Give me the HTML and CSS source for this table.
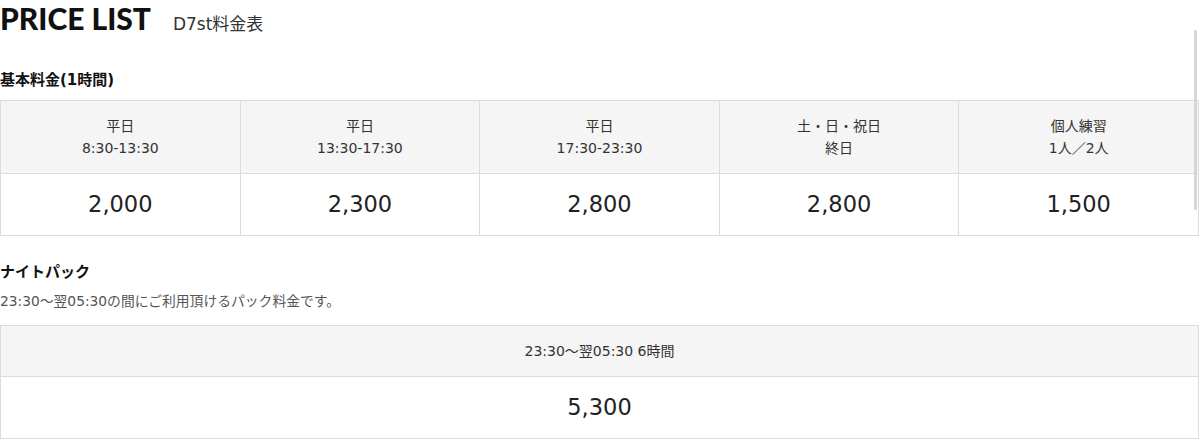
FILE: index.html
```html
<!DOCTYPE html>
<html lang="ja">
<head>
<meta charset="utf-8">
<title>PRICE LIST</title>
<link rel="stylesheet" href="styles.css">
</head>
<body>
<div class="page">
  <header class="title">
    <h1 class="title-main">PRICE LIST</h1>
    <span class="title-sub">D7st料金表</span>
  </header>

  <section class="block block-basic">
    <h2 class="block-heading">基本料金(1時間)</h2>
    <table class="price-table">
      <thead>
        <tr>
          <th>平日<br>8:30-13:30</th>
          <th>平日<br>13:30-17:30</th>
          <th>平日<br>17:30-23:30</th>
          <th>土・日・祝日<br>終日</th>
          <th>個人練習<br>1人／2人</th>
        </tr>
      </thead>
      <tbody>
        <tr>
          <td>2,000</td>
          <td>2,300</td>
          <td>2,800</td>
          <td>2,800</td>
          <td>1,500</td>
        </tr>
      </tbody>
    </table>
  </section>

  <section class="block block-night">
    <h2 class="block-heading">ナイトパック</h2>
    <p class="block-desc">23:30〜翌05:30の間にご利用頂けるパック料金です。</p>
    <table class="price-table">
      <thead>
        <tr><th>23:30〜翌05:30 6時間</th></tr>
      </thead>
      <tbody>
        <tr><td>5,300</td></tr>
      </tbody>
    </table>
  </section>

  <div class="scroll-thumb"></div>
</div>
</body>
</html>
```

FILE: styles.css
```css
* { box-sizing: border-box; }

html, body {
  margin: 0;
  padding: 0;
  background: #fff;
}

body {
  font-family: "DejaVu Sans", "Noto Sans CJK JP", sans-serif;
  color: #222;
}

.page {
  position: relative;
  width: 1199px;
}

.title {
  display: flex;
  align-items: baseline;
  height: 36px;
}

.title-main {
  margin: 0;
  font-family: "Lato", "Noto Sans CJK JP", sans-serif;
  font-weight: 900;
  font-size: 30px;
  line-height: 36px;
  color: #111;
}

.title-sub {
  margin-left: 22px;
  font-size: 17px;
  color: #333;
}

.block-heading {
  margin: 0;
  font-size: 15px;
  font-weight: bold;
  line-height: 20px;
  color: #111;
}

.block-basic { padding-top: 34px; }
.block-basic .block-heading { margin-bottom: 10px; }

.block-night { padding-top: 26px; }
.block-night .block-heading { margin-bottom: 9px; }

.block-desc {
  margin: 0 0 14px;
  font-size: 13.8px;
  line-height: 20px;
  color: #555;
}

.price-table {
  width: 100%;
  border-collapse: collapse;
  table-layout: fixed;
}

.price-table th,
.price-table td {
  border: 1px solid #dcdcdc;
  text-align: center;
  padding: 14px 4px;
}

.price-table th {
  background: #f5f5f5;
  font-weight: normal;
  font-size: 14px;
  line-height: 22px;
  color: #333;
}

.price-table td {
  font-size: 22.5px;
  line-height: 33px;
  color: #222;
}

.scroll-thumb {
  position: absolute;
  left: 1194px;
  top: 30px;
  width: 3px;
  height: 180px;
  border-radius: 2px;
  background: #d6d6d6;
}
```
